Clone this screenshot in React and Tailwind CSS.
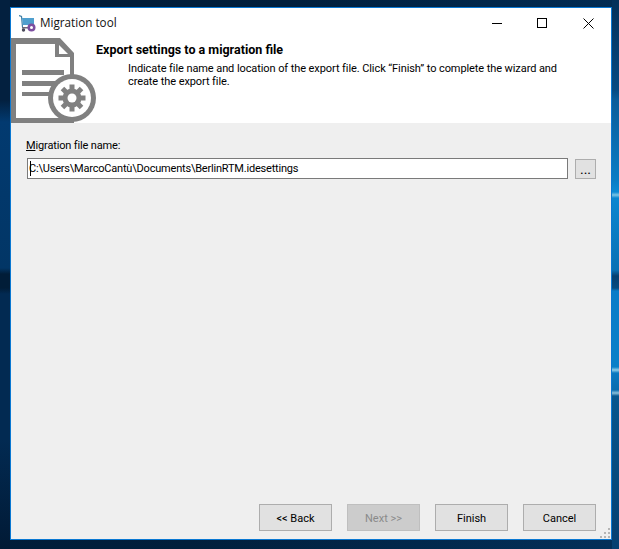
const font = { fontFamily: 'Roboto, "Open Sans", sans-serif' };
const titleFont = { fontFamily: '"Open Sans", sans-serif' };

const WizardIcon = () => (
  <svg width="86" height="85" viewBox="0 0 86 85" className="shrink-0">
    <path d="M0 0H49L63 15V85H0Z M5 6V80H59V19H44V6Z" fill="#808080" fillRule="evenodd" />
    <path d="M5 6H44V19H59V80H5Z" fill="#fff" />
    <path d="M48 7L57 16H48Z" fill="#fff" />
    <rect x="11" y="32" width="42" height="5" fill="#808080" />
    <rect x="11" y="43" width="42" height="5" fill="#808080" />
    <rect x="11" y="54" width="42" height="4" fill="#808080" />
    <circle cx="61" cy="60" r="24" fill="#808080" />
    <circle cx="61" cy="60" r="19" fill="#fff" />
    <g fill="#808080">
      <circle cx="61" cy="60" r="9.5" />
      <rect x="58.5" y="46.5" width="5" height="27" />
      <rect x="47.5" y="57.5" width="27" height="5" />
      <rect x="58.5" y="46.5" width="5" height="27" transform="rotate(45 61 60)" />
      <rect x="58.5" y="46.5" width="5" height="27" transform="rotate(-45 61 60)" />
    </g>
    <circle cx="61" cy="60" r="4.5" fill="#fff" />
  </svg>
);

const AppIcon = () => (
  <svg width="17" height="17" viewBox="0 0 17 17">
    <path d="M0 0.5L2.5 1.5L3.5 12" stroke="#3f7fa6" strokeWidth="1.2" fill="none" />
    <path d="M3 3H15V10H4Z" fill="#4f9fce" />
    <rect x="3" y="12" width="8" height="1.5" fill="#6b6b7a" />
    <circle cx="4.5" cy="15" r="1.7" fill="#4a4a5a" />
    <circle cx="12.5" cy="12.5" r="4" fill="#7c4fa0" />
    <circle cx="12.5" cy="12.5" r="1.5" fill="#fff" />
  </svg>
);

const WizardButton = ({ label, disabled }) => (
  <button
    className={`w-[73px] h-[27px] pt-[3px] border text-[11px] ${
      disabled
        ? "bg-[#cccccc] border-[#bfbfbf] text-[#8a8a8a]"
        : "bg-[#e1e1e1] border-[#adadad] text-black"
    }`}
  >
    {label}
  </button>
);

export default function App() {
  return (
    <div
      className="w-[619px] h-[549px] pt-[7px] pl-[10px] overflow-hidden [background:linear-gradient(to_bottom,#03203f_0,#03203f_100px,#023a70_122px,#023666_268px,#011d38_274px,#011d38_288px,#022a52_294px,#022a52_440px,#011a35_549px)_left/10px_100%_no-repeat,linear-gradient(to_bottom,#03305a_0,#074a82_90px,#0a5c9a_100px,#0a7cc4_180px,#0c8ad4_192px,#7cc4e4_195px,#0b86d0_198px,#0a70b4_270px,#053e70_276px,#064a80_288px,#0a7cc8_291px,#0a80c8_367px,#8fcde8_370px,#0a78c0_373px,#0a6cae_390px,#88c0dc_393px,#07568e_396px,#053f70_549px)_right/7px_100%_no-repeat,linear-gradient(100deg,#011c38_0%,#011f3c_40%,#03305a_100%)]"
      style={font}
    >
      <div className="w-[602px] h-[533px] border border-[#0a78d2] bg-white flex flex-col">
        {/* title bar */}
        <div className="h-[30px] shrink-0 flex items-center">
          <div className="ml-[8px] mt-[1px]"><AppIcon /></div>
          <span className="ml-[4px] text-[11.7px] text-[#111]" style={titleFont}>Migration tool</span>
          <div className="ml-auto flex items-center mr-[17px]">
            <div className="w-[10px] h-px bg-black" />
            <div className="w-[10px] h-[10px] border border-black ml-[35px]" />
            <svg width="11" height="11" viewBox="0 0 11 11" className="ml-[36px]">
              <path d="M0.5 0.5L10.5 10.5M10.5 0.5L0.5 10.5" stroke="#000" strokeWidth="1" />
            </svg>
          </div>
        </div>

        {/* header */}
        <div className="h-[85px] shrink-0 flex">
          <WizardIcon />
          <div className="pt-[5px] text-[11px] leading-[14px] text-black">
            <div className="font-bold text-[12.5px] -ml-px">Export settings to a migration file</div>
            <div className="ml-[31px] mt-[5px] leading-[13px] tracking-[-0.085px]">
              Indicate file name and location of the export file. Click “Finish” to complete the wizard and
              <br />
              create the export file.
            </div>
          </div>
        </div>

        {/* body */}
        <div className="flex-1 bg-[#efefef] flex flex-col relative">
          <div className="ml-[15px] mt-[16px] text-[11px] leading-[14px] text-black tracking-[-0.15px]">
            <span className="underline">M</span>igration file name:
          </div>
          <div className="flex mt-[5px] ml-[16px] items-center">
            <div className="relative w-[541px] h-[21px] border border-[#7a7a7a] bg-white text-[11px] leading-[19px] pl-[1px] text-black tracking-[-0.2px]">
              C:\Users\MarcoCantù\Documents\BerlinRTM.idesettings
              <span className="absolute left-[2px] top-[2px] w-px h-[15px] bg-black" />
            </div>
            <button className="ml-[7px] w-[21px] h-[20px] border border-[#adadad] bg-[#e1e1e1] text-[14px] leading-none">...</button>
          </div>
          <div className="mt-auto mb-[8px] flex justify-end gap-[15px] mr-[15px]">
            <WizardButton label="<< Back" />
            <WizardButton label="Next >>" disabled />
            <WizardButton label="Finish" />
            <WizardButton label="Cancel" />
          </div>
          {/* size grip */}
          <svg width="11" height="11" viewBox="0 0 11 11" className="absolute right-0 bottom-0" fill="#b5b5b5">
            <rect x="8" y="0" width="2" height="2" />
            <rect x="4" y="4" width="2" height="2" />
            <rect x="8" y="4" width="2" height="2" />
            <rect x="0" y="8" width="2" height="2" />
            <rect x="4" y="8" width="2" height="2" />
            <rect x="8" y="8" width="2" height="2" />
          </svg>
        </div>
      </div>
    </div>
  );
}
